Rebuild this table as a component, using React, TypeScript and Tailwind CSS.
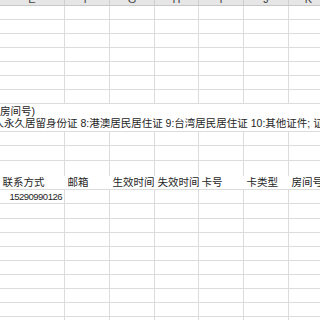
const font = "font-['Liberation_Sans','Noto_Sans_CJK_SC',sans-serif]";

const colWidths = ['w-[65px]', 'w-[45px]', 'w-[45px]', 'w-[44px]', 'w-[45px]', 'w-[45px]', 'w-[40px]'];
const letters = ['E', 'F', 'G', 'H', 'I', 'J', 'K'];

function GridRow({ h, hideBottom }: { h: string; hideBottom?: boolean }) {
  return (
    <div className={`flex shrink-0 ${h} ${hideBottom ? '' : 'border-b border-[#dcdcdc]'}`}>
      {colWidths.map((w, i) => (
        <div key={i} className={`${w} shrink-0 border-r border-[#dcdcdc]`} />
      ))}
    </div>
  );
}

export default function App() {
  const headers = ['联系方式', '邮箱', '生效时间', '失效时间', '卡号', '卡类型', '房间号'];

  return (
    <div className={`w-[320px] h-[320px] overflow-hidden bg-white text-[#262626] ${font}`}>
      {/* column letters, cut off at top */}
      <div className="flex h-[6px] shrink-0 overflow-hidden bg-[#e6e6e6] border-b border-[#c8c8c8]">
        {colWidths.map((w, i) => (
          <div key={i} className={`${w} shrink-0 border-r border-[#cfcfcf] text-center`}>
            <span className="block -mt-[6px] text-[11px] leading-none text-[#444]">{letters[i]}</span>
          </div>
        ))}
      </div>

      {['a', 'b', 'c', 'd', 'e', 'f', 'g'].map((k) => (
        <GridRow key={k} h="h-[14px]" />
      ))}

      {/* merged note cell */}
      <div className="h-[28px] shrink-0 overflow-hidden whitespace-nowrap border-b border-[#dcdcdc] pt-[2px] text-[10.5px] leading-[11.5px]">
        <div>房间号)</div>
        <div className="-ml-[27.5px]">外国人永久居留身份证 8:港澳居民居住证 9:台湾居民居住证 10:其他证件; 证件号码</div>
      </div>

      <GridRow h="h-[14px]" />
      <GridRow h="h-[15px]" />
      <GridRow h="h-[15px]" hideBottom />

      {/* header row */}
      <div className="flex h-[14px] shrink-0 border-b border-[#dcdcdc] text-[10.5px] leading-[13px] whitespace-nowrap">
        {headers.map((t, i) => (
          <div key={i} className={`${colWidths[i]} shrink-0 pl-[2.5px]`}>
            {t}
          </div>
        ))}
      </div>

      {/* data row */}
      <div className="flex h-[14px] shrink-0 border-b border-[#dcdcdc]">
        {colWidths.map((w, i) => (
          <div key={i} className={`${w} shrink-0 border-r border-[#dcdcdc] pr-[2px] text-right text-[9.5px] leading-[13px] tracking-[-0.5px]`}>
            {i === 0 ? '15290990126' : ''}
          </div>
        ))}
      </div>

      <GridRow h="h-[15px]" />
      {['a', 'b', 'c', 'd', 'e', 'f', 'g', 'h'].map((k) => (
        <GridRow key={k} h="h-[14px]" />
      ))}
    </div>
  );
}
